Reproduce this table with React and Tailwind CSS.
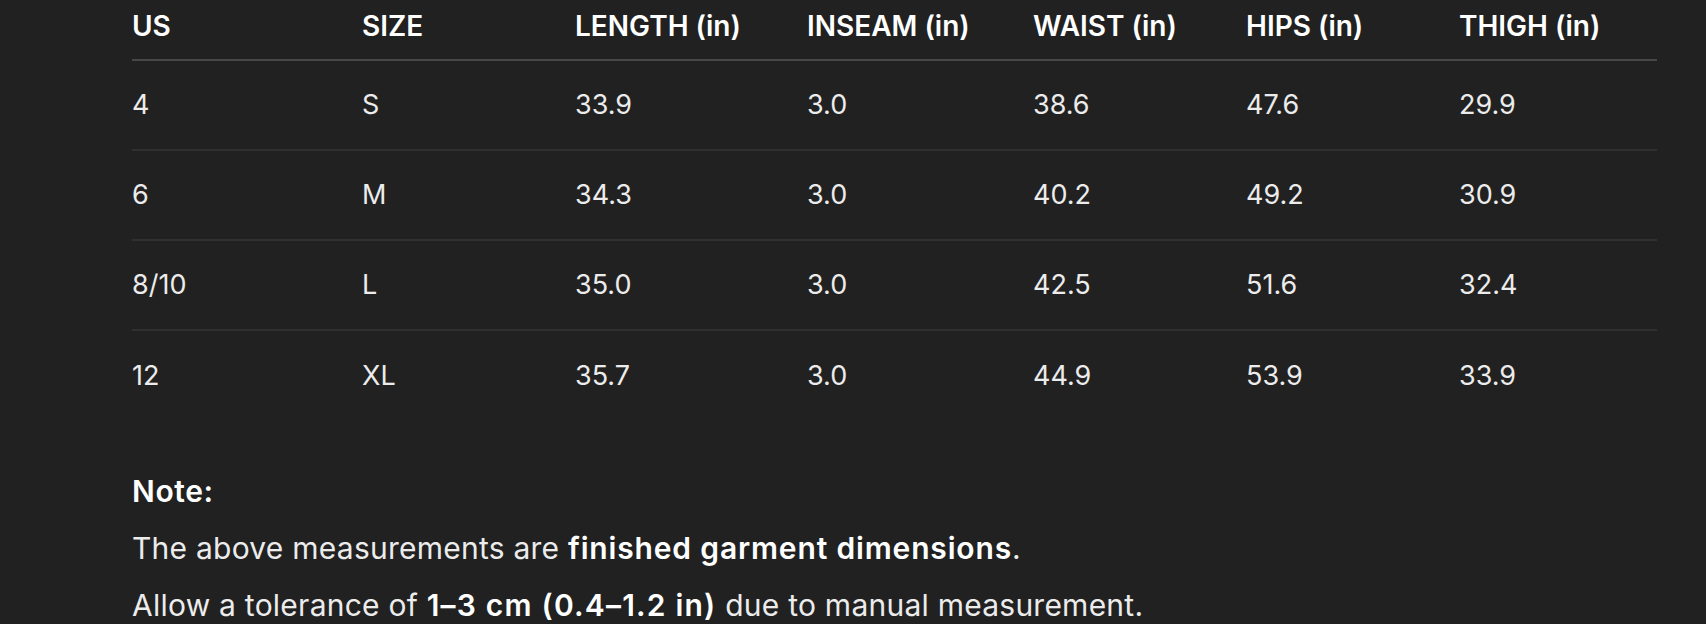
const columns = ["US", "SIZE", "LENGTH (in)", "INSEAM (in)", "WAIST (in)", "HIPS (in)", "THIGH (in)"];

const rows = [
  ["4", "S", "33.9", "3.0", "38.6", "47.6", "29.9"],
  ["6", "M", "34.3", "3.0", "40.2", "49.2", "30.9"],
  ["8/10", "L", "35.0", "3.0", "42.5", "51.6", "32.4"],
  ["12", "XL", "35.7", "3.0", "44.9", "53.9", "33.9"],
];

const gridCols = "grid grid-cols-[230px_213px_232px_226px_213px_213px_198px]";

function SizeTable() {
  return (
    <div className="w-[1525px]">
      <div className={`${gridCols} h-[61px] border-b-2 border-[#474747] pb-[8px]`}>
        {columns.map((c) => (
          <div key={c} className="flex items-center font-semibold text-[28px] text-white">
            {c}
          </div>
        ))}
      </div>
      {rows.map((r, i) => (
        <div
          key={i}
          className={`${gridCols} h-[90px] pt-[1px] ${i < rows.length - 1 ? "border-b-2 border-[#303030]" : ""}`}
        >
          {r.map((v, j) => (
            <div key={j} className="flex items-center text-[27px] text-[#ececec]">
              {v}
            </div>
          ))}
        </div>
      ))}
    </div>
  );
}

export default function App() {
  return (
    <div
      className="w-[1706px] h-[624px] overflow-hidden bg-[#212121] pl-[132px] text-[#ececec]"
      style={{ fontFamily: "Inter, 'Noto Sans', sans-serif" }}
    >
      <SizeTable />
      <div className="mt-[42px] text-[30px] leading-[57px] tracking-[0.008em]">
        <p className="font-semibold text-white tracking-[0.02em]">Note:</p>
        <p>
          The above measurements are{" "}
          <strong className="font-semibold text-white tracking-[0.028em]">finished garment dimensions</strong>.
        </p>
        <p>
          Allow a tolerance of{" "}
          <strong className="font-semibold text-white tracking-[0.04em]">1–3 cm (0.4–1.2 in)</strong> due to manual
          measurement.
        </p>
      </div>
    </div>
  );
}
